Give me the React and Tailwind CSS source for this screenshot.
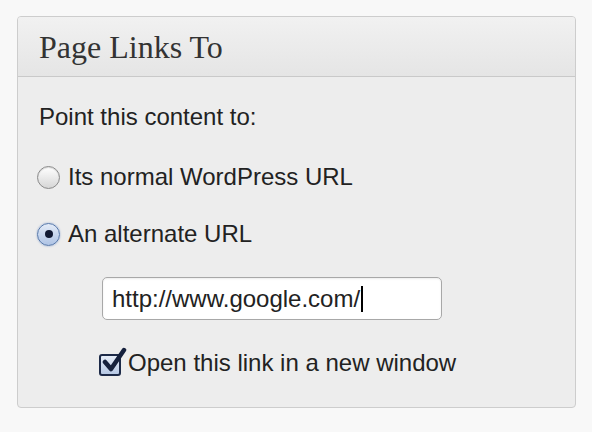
export default function App() {
  return (
    <div className="w-[592px] h-[432px] bg-[#f8f8f8] pt-[16px] pl-[17px] font-['Liberation_Sans',Arial,sans-serif] text-[#222]">
      <div className="w-[559px] h-[392px] border border-[#cdcdcd] rounded-[4px] bg-[#ededed] flex flex-col overflow-hidden">
        <div className="h-[60px] shrink-0 border-b border-[#c9c9c9] bg-gradient-to-b from-[#f1f1f1] to-[#e5e5e5] flex items-center pl-[21px]">
          <span className="font-['Liberation_Serif','Times_New_Roman',serif] text-[32px] text-[#333] leading-none">Page Links To</span>
        </div>
        <div className="flex flex-col pl-[19px] text-[24px] leading-[28px]">
          <div className="mt-[26px] h-[28px] flex items-center pl-[2px]">Point this content to:</div>
          <div className="mt-[32px] h-[28px] flex items-center">
            <span className="w-[23px] h-[23px] rounded-full border border-[#8a8a8a] bg-gradient-to-b from-[#ffffff] to-[#d6d6d6] shadow-[inset_0_1px_1px_rgba(0,0,0,0.15)]" />
            <span className="ml-[8px]">Its normal WordPress URL</span>
          </div>
          <div className="mt-[29px] h-[28px] flex items-center">
            <span className="w-[23px] h-[23px] rounded-full border border-[#5577aa] bg-gradient-to-b from-[#e4ecf8] to-[#aec3e4] flex items-center justify-center shadow-[0_0_2px_rgba(80,120,190,0.6)]">
              <span className="w-[8px] h-[8px] rounded-full bg-[#111a33]" />
            </span>
            <span className="ml-[8px]">An alternate URL</span>
          </div>
          <div className="mt-[29px] ml-[65px] w-[340px] h-[43px] border border-[#a8a8a8] rounded-[5px] bg-white flex items-center pl-[9px] shadow-[inset_0_1px_2px_rgba(0,0,0,0.08)]">
            <span>http://www.google.com/</span>
            <span className="w-[2px] h-[26px] bg-black ml-[1px]" />
          </div>
          <div className="mt-[29px] h-[28px] flex items-center pl-[62px]">
            <span className="relative w-[22px] h-[22px] rounded-[3px] border-2 border-[#1d2a48] bg-gradient-to-b from-[#e6edf8] to-[#b7c8e4] mt-[4px]">
              <svg className="absolute left-[1px] top-[-9px]" width="26" height="28" viewBox="0 0 26 28">
                <path d="M3 15 L9 22 L22 3" fill="none" stroke="#16213d" strokeWidth="4.5" strokeLinecap="round" strokeLinejoin="round" />
              </svg>
            </span>
            <span className="ml-[7px]">Open this link in a new window</span>
          </div>
        </div>
      </div>
    </div>
  );
}
